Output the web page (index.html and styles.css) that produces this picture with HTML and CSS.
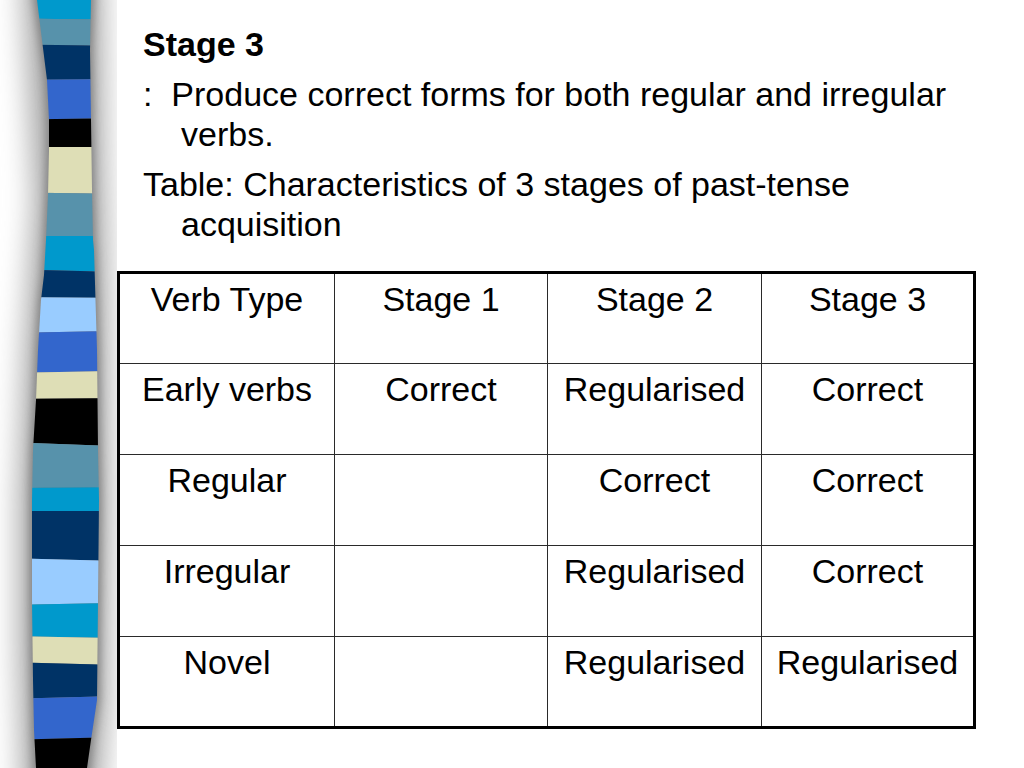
FILE: index.html
```html
<!DOCTYPE html>
<html lang="en">
<head>
<meta charset="utf-8">
<title>Stage 3</title>
<link rel="stylesheet" href="styles.css">
</head>
<body>
<div class="slide">
  <aside class="deco" aria-hidden="true">
    <svg width="117" height="768" viewBox="0 0 117 768" xmlns="http://www.w3.org/2000/svg">
      <defs>
        <filter id="blurWide" filterUnits="userSpaceOnUse" x="-60" y="-60" width="240" height="900">
          <feGaussianBlur stdDeviation="14"/>
        </filter>
        <filter id="blurNarrow" filterUnits="userSpaceOnUse" x="-60" y="-60" width="240" height="900">
          <feGaussianBlur stdDeviation="5"/>
        </filter>
        <clipPath id="barClip">
          <path d="M37 0 L42 40 L47 80 L49 120 L49 150 L48 195 L46 240 L44 275 L41 300 L38 350 L36 400 L33 450 L32 500 L32 600 L33 680 L34 730 L36 768 L87 768 L91 740 L97 700 L98 600 L99 500 L98 450 L97 350 L94 250 L93 240 L92 190 L91 120 L90 50 L91 0 Z"/>
        </clipPath>
      </defs>
      <path filter="url(#blurWide)" fill="#a8a8a8" d="M22 -30 L30 120 L34 200 L24 350 L18 500 L18 650 L22 800 L100 800 L108 700 L110 500 L108 300 L104 150 L102 -30 Z"/>
      <path filter="url(#blurNarrow)" fill="#7e7e7e" d="M33 -10 L40 40 L45 80 L47 120 L47 150 L46 195 L44 240 L42 275 L39 300 L36 350 L34 400 L31 450 L30 500 L30 600 L31 680 L32 730 L34 778 L89 778 L93 740 L99 700 L100 600 L101 500 L100 450 L99 350 L96 250 L95 240 L94 190 L93 120 L92 50 L94 -10 Z"/>
      <g clip-path="url(#barClip)">
        <polygon fill="#0099cc" points="0,0 117,0 117,20 0,18"/>
        <polygon fill="#5792ab" points="0,18 117,20 117,46 0,44"/>
        <polygon fill="#003366" points="0,44 117,46 117,79 0,80"/>
        <polygon fill="#3366cc" points="0,80 117,79 117,118 0,120"/>
        <polygon fill="#000000" points="0,120 117,118 117,147 0,147"/>
        <polygon fill="#dedeb6" points="0,147 117,147 117,194 0,192"/>
        <polygon fill="#5792ab" points="0,192 117,194 117,236 0,236"/>
        <polygon fill="#0099cc" points="0,236 117,236 117,272 0,269"/>
        <polygon fill="#003366" points="0,269 117,272 117,298 0,297"/>
        <polygon fill="#99ccff" points="0,297 117,298 117,331 0,333"/>
        <polygon fill="#3366cc" points="0,333 117,331 117,371 0,373"/>
        <polygon fill="#dedeb6" points="0,373 117,371 117,398 0,399"/>
        <polygon fill="#000000" points="0,399 117,398 117,446 0,442"/>
        <polygon fill="#5792ab" points="0,442 117,446 117,487 0,488"/>
        <polygon fill="#0099cc" points="0,488 117,487 117,511 0,511"/>
        <polygon fill="#003366" points="0,511 117,511 117,561 0,558"/>
        <polygon fill="#99ccff" points="0,558 117,561 117,603 0,605"/>
        <polygon fill="#0099cc" points="0,605 117,603 117,638 0,636"/>
        <polygon fill="#dedeb6" points="0,636 117,638 117,665 0,662"/>
        <polygon fill="#003366" points="0,662 117,665 117,696 0,699"/>
        <polygon fill="#3366cc" points="0,699 117,696 117,737 0,740"/>
        <polygon fill="#000000" points="0,740 117,737 117,768 0,768"/>
      </g>
    </svg>
  </aside>
  <main class="content">
    <p class="title">Stage 3</p>
    <p class="item">:&nbsp; Produce correct forms for both regular and irregular verbs.</p>
    <p class="item">Table: Characteristics of 3 stages of past-tense acquisition</p>
    <table class="stages">
      <colgroup>
        <col class="c1"><col class="c2"><col class="c3"><col class="c4">
      </colgroup>
      <tr><td>Verb Type</td><td>Stage 1</td><td>Stage 2</td><td>Stage 3</td></tr>
      <tr><td>Early verbs</td><td>Correct</td><td>Regularised</td><td>Correct</td></tr>
      <tr><td>Regular</td><td></td><td>Correct</td><td>Correct</td></tr>
      <tr><td>Irregular</td><td></td><td>Regularised</td><td>Correct</td></tr>
      <tr><td>Novel</td><td></td><td>Regularised</td><td>Regularised</td></tr>
    </table>
  </main>
</div>
</body>
</html>
```

FILE: styles.css
```css
html, body {
  margin: 0;
  padding: 0;
  background: #ffffff;
}

.slide {
  width: 1024px;
  height: 768px;
  display: flex;
  overflow: hidden;
  font-family: "Liberation Sans", Arial, sans-serif;
  color: #000000;
}

.deco {
  flex: 0 0 117px;
  height: 768px;
}

.deco svg {
  display: block;
}

.content {
  flex: 1 1 auto;
  padding-top: 24px;
}

.content p {
  margin: 0 0 10px 0;
  font-size: 34px;
  line-height: 40px;
  width: 832px;
  padding-left: 26px;
}

.title {
  font-weight: bold;
}

.item {
  box-sizing: border-box;
  padding-left: 64px !important;
  text-indent: -38px;
}

.stages {
  margin-top: 27px;
  border-collapse: collapse;
  table-layout: fixed;
  width: 856px;
  border: 3px solid #000000;
  font-size: 34px;
  line-height: 40px;
}

.stages col.c1 { width: 216px; }
.stages col.c2 { width: 213px; }
.stages col.c3 { width: 214px; }
.stages col.c4 { width: 213px; }

.stages td {
  border: 1px solid #2a2a2a;
  height: 91px;
  box-sizing: border-box;
  padding: 5px 2px 0 2px;
  text-align: center;
  vertical-align: top;
  white-space: nowrap;
}
```
